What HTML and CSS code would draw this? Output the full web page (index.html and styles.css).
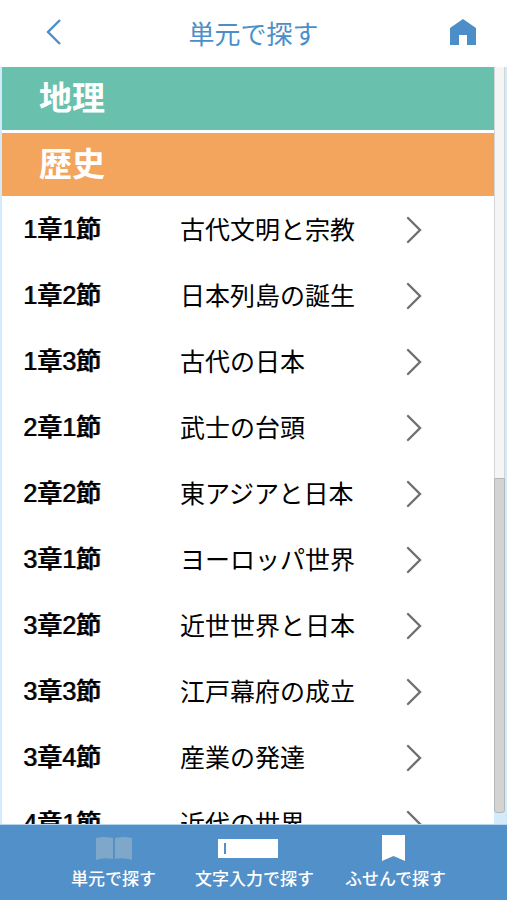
FILE: index.html
```html
<!DOCTYPE html>
<html lang="ja">
<head>
<meta charset="utf-8">
<meta name="viewport" content="width=device-width, initial-scale=1">
<title>単元で探す</title>
<link rel="stylesheet" href="styles.css">
</head>
<body>
<header class="topbar">
  <button class="icon-button back" type="button" aria-label="戻る">
    <svg width="16" height="28" viewBox="0 0 16 28" fill="none" stroke="currentColor" stroke-width="2.400"><path d="M14 1 2 13 14 25"/></svg>
  </button>
  <h1 class="title">単元で探す</h1>
  <button class="icon-button home" type="button" aria-label="ホーム">
    <svg width="28" height="28" viewBox="0 0 28 28" fill="currentColor"><path d="M14 0 27 9V26H18V16H10V26H1V9Z"/></svg>
  </button>
</header>
<main class="content">
  <div class="units">
    <h2 class="subject geography">地理</h2>
    <h2 class="subject history">歴史</h2>
    <ul class="chapters">
      <li><a class="chapter" href="#c1-1"><span class="number">1章1節</span><span class="name">古代文明と宗教</span><svg class="arrow" viewBox="0 0 16 28"><path d="M2 2 14 14 2 26"/></svg></a></li>
      <li><a class="chapter" href="#c1-2"><span class="number">1章2節</span><span class="name">日本列島の誕生</span><svg class="arrow" viewBox="0 0 16 28"><path d="M2 2 14 14 2 26"/></svg></a></li>
      <li><a class="chapter" href="#c1-3"><span class="number">1章3節</span><span class="name">古代の日本</span><svg class="arrow" viewBox="0 0 16 28"><path d="M2 2 14 14 2 26"/></svg></a></li>
      <li><a class="chapter" href="#c2-1"><span class="number">2章1節</span><span class="name">武士の台頭</span><svg class="arrow" viewBox="0 0 16 28"><path d="M2 2 14 14 2 26"/></svg></a></li>
      <li><a class="chapter" href="#c2-2"><span class="number">2章2節</span><span class="name">東アジアと日本</span><svg class="arrow" viewBox="0 0 16 28"><path d="M2 2 14 14 2 26"/></svg></a></li>
      <li><a class="chapter" href="#c3-1"><span class="number">3章1節</span><span class="name">ヨーロッパ世界</span><svg class="arrow" viewBox="0 0 16 28"><path d="M2 2 14 14 2 26"/></svg></a></li>
      <li><a class="chapter" href="#c3-2"><span class="number">3章2節</span><span class="name">近世世界と日本</span><svg class="arrow" viewBox="0 0 16 28"><path d="M2 2 14 14 2 26"/></svg></a></li>
      <li><a class="chapter" href="#c3-3"><span class="number">3章3節</span><span class="name">江戸幕府の成立</span><svg class="arrow" viewBox="0 0 16 28"><path d="M2 2 14 14 2 26"/></svg></a></li>
      <li><a class="chapter" href="#c3-4"><span class="number">3章4節</span><span class="name">産業の発達</span><svg class="arrow" viewBox="0 0 16 28"><path d="M2 2 14 14 2 26"/></svg></a></li>
      <li><a class="chapter" href="#c4-1"><span class="number">4章1節</span><span class="name">近代の世界</span><svg class="arrow" viewBox="0 0 16 28"><path d="M2 2 14 14 2 26"/></svg></a></li>
    </ul>
  </div>
  <div class="scrollbar" aria-hidden="true">
    <div class="track"></div>
    <div class="thumb"></div>
  </div>
</main>
<nav class="tabs">
  <a class="tab" href="#units" aria-current="page">
    <svg width="36" height="28" viewBox="0 0 36 28" fill="#7fa7c9"><path d="M0 4Q8 2 17 4V25Q8 23 0 26ZM19 4Q28 2 36 4V26Q28 23 19 25Z"/></svg>
    <span>単元で探す</span>
  </a>
  <a class="tab" href="#text">
    <svg width="74" height="28" viewBox="0 0 74 28"><path fill="#fff" d="M0 5H60V24H0Z"/><path fill="#5190c8" d="M6 9H8V20H6Z"/></svg>
    <span>文字入力で探す</span>
  </a>
  <a class="tab" href="#notes">
    <svg width="28" height="28" viewBox="0 0 28 28" fill="#fff"><path d="M0 1H23V27L11.500 22 0 27Z"/></svg>
    <span>ふせんで探す</span>
  </a>
</nav>
</body>
</html>
```
FILE: styles.css
```css
* {
  box-sizing: border-box;
}

body {
  margin: 0;
  height: 100vh;
  display: flex;
  flex-direction: column;
  background: #d3eafa;
  color: #000;
  font-family: "Noto Sans CJK JP", sans-serif;
}

h1,
h2,
ul {
  margin: 0;
  padding: 0;
  font-size: inherit;
  list-style: none;
}

a {
  color: inherit;
  text-decoration: none;
}

svg {
  display: block;
}

.topbar {
  flex: none;
  height: 67px;
  padding: 0 30px 2px 40px;
  display: grid;
  grid-template-columns: 1fr auto 1fr;
  align-items: center;
  background: #fff;
  color: #4c8fc8;
}

.icon-button {
  width: 28px;
  height: 28px;
  padding: 0;
  border: 0;
  display: flex;
  align-items: center;
  justify-content: center;
  background: none;
  color: inherit;
}

.home {
  justify-self: end;
}

.title {
  margin-right: 10px;
  font-size: 26px;
  font-weight: 400;
  line-height: 32px;
}

.content {
  flex: 1;
  min-height: 0;
  display: flex;
  overflow: hidden;
  padding: 0 2px;
  border-bottom: 1px solid #b5d5ef;
}

.units {
  flex: 1;
  overflow: hidden;
  background: #fff;
}

.subject {
  height: 63px;
  padding-left: 37px;
  color: #fff;
  font-size: 33px;
  font-weight: 700;
  line-height: 58px;
}

.geography {
  background: #69c1ad;
  margin-bottom: 3px;
}

.history {
  background: #f3a55d;
}

.chapters {
  padding-top: 1px;
}

.chapter {
  height: 66px;
  padding: 0 72px 0 21px;
  display: flex;
  align-items: center;
}

.number,
.name {
  font-size: 25px;
  line-height: 30px;
}

.number {
  width: 157px;
  padding-bottom: 2px;
  font-family: "Liberation Sans", "Noto Sans CJK JP", sans-serif;
  font-weight: 500;
  text-shadow: 1px 0 #444;
}

.name {
  padding-bottom: 4px;
}

.arrow {
  width: 16px;
  height: 28px;
  margin-left: auto;
  fill: none;
  stroke: #707070;
  stroke-width: 2.4;
  stroke-linecap: round;
}

.scrollbar {
  width: 11px;
  padding-bottom: 11px;
  display: flex;
  flex-direction: column;
}

.track {
  flex: 412;
  background: #f5f5f5;
  border: solid #d5d5d5;
  border-width: 0 1px;
}

.thumb {
  flex: 333;
  background: #d3d3d3;
  border: 1px solid #b4b8ba;
  border-radius: 0 0 3px 3px;
}

.tabs {
  flex: none;
  height: 75px;
  padding: 9px 41px 0 43px;
  display: grid;
  grid-template-columns: repeat(3, 1fr);
  background: #5190c8;
  color: #fff;
}

.tab {
  display: flex;
  flex-direction: column;
  align-items: center;
  gap: 4px;
  font-size: 17px;
  font-weight: 500;
  line-height: 24px;
  white-space: nowrap;
}
```
